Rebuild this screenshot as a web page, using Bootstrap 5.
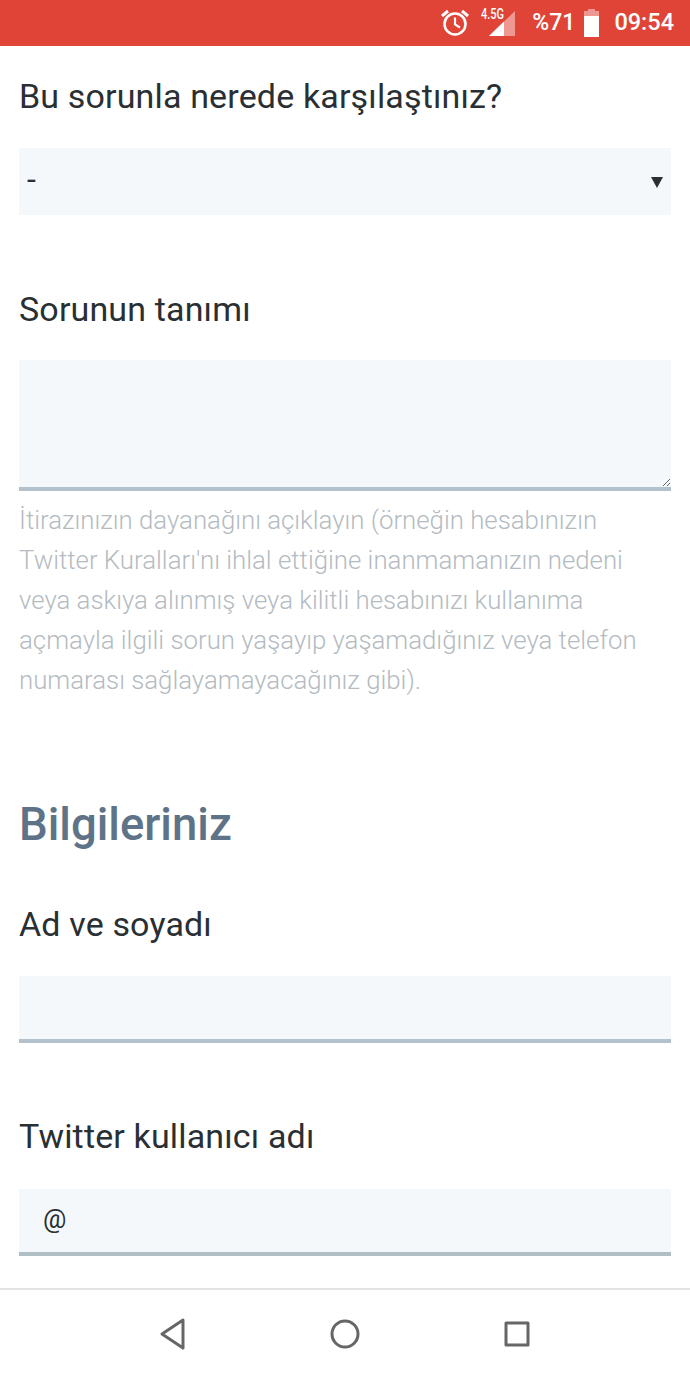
<!DOCTYPE html>
<html lang="tr">
<head>
<meta charset="utf-8">
<title>Bu sorunla nerede karşılaştınız?</title>
<link rel="stylesheet" href="https://cdn.jsdelivr.net/npm/bootstrap@5.3.0/dist/css/bootstrap.min.css">
<style>
html,body{height:1380px;overflow:hidden;background:#fff}
body{font-family:Roboto,"Liberation Sans",sans-serif;color:#292f33}
.phone-frame{height:1380px}
.status-strip{height:46px;background:#e04437;color:#fff;font-size:23px;font-weight:500;padding-right:16px;flex:none}
.status-alarm{margin-right:10px}
.status-pct{margin-left:16px;margin-right:9px}
.status-time{margin-left:15px;font-size:23.5px}
.form-area{padding:0 19px;flex:1 1 auto;overflow:hidden}
.fld-label{font-size:34px;font-weight:400;letter-spacing:.15px;line-height:40px;margin:0;display:block;color:#292f33}
.lbl-first{margin-top:30px}
.fld-control{display:block;width:100%;background:#f5f8fa;border:0;border-radius:0;color:#292f33;font-family:inherit;font-size:26px;outline:0}
.fld-select{height:67px;margin-top:32px;padding:0 8px 5px;font-size:32px;appearance:none;background-image:url("data:image/svg+xml,%3Csvg xmlns='http://www.w3.org/2000/svg' width='12' height='12'%3E%3Cpath d='M0 1h12L6 12z' fill='%23292f33'/%3E%3C/svg%3E");background-repeat:no-repeat;background-position:right 8px center}
.lbl-second{margin-top:74px}
.fld-area{height:131px;margin-top:31px;border-bottom:4px solid #b4c0ca;resize:vertical;padding:8px}
.fld-help{font-size:25.8px;font-weight:300;line-height:40px;color:#b4bbc1;margin:9px 0 0}
.sec-title{font-size:45.5px;font-weight:500;line-height:56px;color:#5f7388;margin:97px 0 0}
.lbl-third{margin-top:51px}
.fld-input{height:67px;margin-top:32px;border-bottom:4px solid #b4c0ca;padding:0 24px 3px}
.lbl-fourth{margin-top:73px}
.fld-last{margin-top:33px;border-bottom-color:#b0bfc4}
.bottom-nav{height:92px;border-top:2px solid #e3e3e3;flex:none;background:#fff;padding-bottom:2px}
.nav-slot{width:172px;display:flex;justify-content:center}
</style>
</head>
<body>
<div class="phone-frame d-flex flex-column">
  <div class="status-strip d-flex align-items-center justify-content-end">
    <svg class="status-alarm" width="30" height="30" viewBox="0 0 30 30" fill="none" stroke="#fff" stroke-width="2.6" aria-hidden="true"><circle cx="15" cy="16" r="10.5"/><path d="M15 9.5V16.5L20 19.5" stroke-width="2.2"/><path d="M2 8 8 3M28 8 22 3" stroke-width="3"/></svg>
    <svg width="36" height="36" viewBox="0 0 36 36" aria-hidden="true"><path d="M9 31 35 6V31z" fill="#fff" fill-opacity=".45"/><path d="M9 31 24 16.500V31z" fill="#fff"/><text x="1" y="14" font-family="Roboto,sans-serif" font-size="14" font-weight="500" fill="#fff" textLength="23" lengthAdjust="spacingAndGlyphs">4.5G</text></svg>
    <span class="status-pct">%71</span>
    <svg width="15" height="28" viewBox="0 0 15 28" aria-hidden="true"><path d="M4 0h7v2h4v26H0V2h4z" fill="#fff" fill-opacity=".45"/><path d="M0 7h15v21H0z" fill="#fff"/></svg>
    <span class="status-time">09:54</span>
  </div>
  <form class="form-area">
    <label class="fld-label lbl-first" for="f1">Bu sorunla nerede karşılaştınız?</label>
    <select id="f1" class="fld-control fld-select"><option>-</option></select>
    <label class="fld-label lbl-second" for="f2">Sorunun tanımı</label>
    <textarea id="f2" class="fld-control fld-area"></textarea>
    <p class="fld-help">İtirazınızın dayanağını açıklayın (örneğin hesabınızın Twitter Kuralları'nı ihlal ettiğine inanmamanızın nedeni veya askıya alınmış veya kilitli hesabınızı kullanıma açmayla ilgili sorun yaşayıp yaşamadığınız veya telefon numarası sağlayamayacağınız gibi).</p>
    <h2 class="sec-title">Bilgileriniz</h2>
    <label class="fld-label lbl-third" for="f3">Ad ve soyadı</label>
    <input id="f3" class="fld-control fld-input" type="text">
    <label class="fld-label lbl-fourth" for="f4">Twitter kullanıcı adı</label>
    <input id="f4" class="fld-control fld-input fld-last" type="text" value="@">
  </form>
  <div class="bottom-nav d-flex align-items-center justify-content-center">
    <div class="nav-slot"><svg width="28" height="32" viewBox="0 0 28 32" fill="none" stroke="#666" stroke-width="3" stroke-linejoin="round" aria-hidden="true"><path d="M24 2V30L3 16z"/></svg></div>
    <div class="nav-slot"><svg width="30" height="30" viewBox="0 0 30 30" fill="none" stroke="#666" stroke-width="3" aria-hidden="true"><circle cx="15" cy="15" r="13"/></svg></div>
    <div class="nav-slot"><svg width="26" height="26" viewBox="0 0 26 26" fill="none" stroke="#666" stroke-width="3" stroke-linejoin="round" aria-hidden="true"><rect x="2" y="2" width="22" height="22"/></svg></div>
  </div>
</div>
<script src="https://cdn.jsdelivr.net/npm/bootstrap@5.3.0/dist/js/bootstrap.bundle.min.js"></script>
</body>
</html>
